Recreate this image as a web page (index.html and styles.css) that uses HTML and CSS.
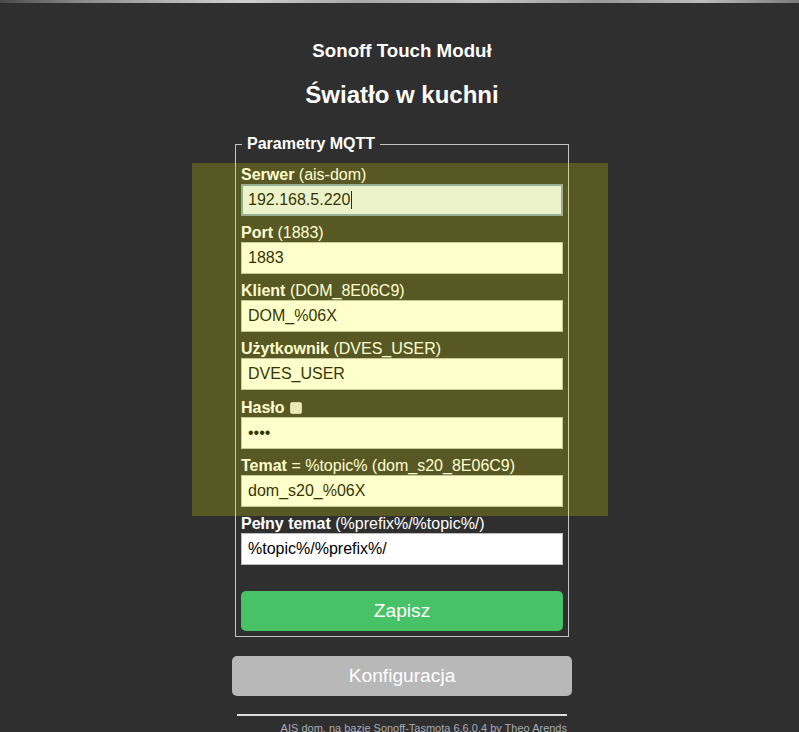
FILE: index.html
```html
<!DOCTYPE html>
<html lang="pl">
<head>
<meta charset="utf-8">
<title>Sonoff Touch Moduł - Parametry MQTT</title>
<link rel="stylesheet" href="styles.css">
</head>
<body>
<div class="topstrip"></div>
<div class="page">
  <div class="container">
    <div class="heading">
      <h3>Sonoff Touch Moduł</h3>
      <h2>Światło w kuchni</h2>
    </div>
    <form class="form">
      <fieldset class="box">
        <legend class="legend">Parametry MQTT</legend>
        <div class="field">
          <label class="label"><b>Serwer</b> (ais-dom)</label>
          <div class="input-wrap">
            <input class="input input-focus" type="text" value="192.168.5.220">
            <span class="caret"></span>
          </div>
        </div>
        <div class="field">
          <label class="label"><b>Port</b> (1883)</label>
          <input class="input" type="text" value="1883">
        </div>
        <div class="field">
          <label class="label"><b>Klient</b> (DOM_8E06C9)</label>
          <input class="input" type="text" value="DOM_%06X">
        </div>
        <div class="field">
          <label class="label"><b>Użytkownik</b> (DVES_USER)</label>
          <input class="input" type="text" value="DVES_USER">
        </div>
        <div class="field">
          <label class="label label-tall"><b>Hasło</b><span class="check"></span></label>
          <input class="input" type="password" value="1234">
        </div>
        <div class="field">
          <label class="label"><b>Temat</b> = %topic% (dom_s20_8E06C9)</label>
          <input class="input" type="text" value="dom_s20_%06X">
        </div>
        <div class="field">
          <label class="label"><b>Pełny temat</b> (%prefix%/%topic%/)</label>
          <input class="input" type="text" value="%topic%/%prefix%/">
        </div>
        <button type="button" class="btn btn-save">Zapisz</button>
      </fieldset>
    </form>
    <button type="button" class="btn btn-config">Konfiguracja</button>
    <div class="footer">
      <hr class="rule">
      <span class="credit">AIS dom. na bazie Sonoff-Tasmota 6.6.0.4 by Theo Arends</span>
    </div>
  </div>
</div>
<div class="highlight"></div>
</body>
</html>
```

FILE: styles.css
```css
html, body {
  margin: 0;
  padding: 0;
  background: #2f2f2f;
  height: 100%;
  overflow: hidden;
}

body {
  font-family: "Liberation Sans", Arial, sans-serif;
  color: #ffffff;
  position: relative;
}

.topstrip {
  height: 3px;
  background: linear-gradient(to right, #4a4a4a 0%, #8a8a8a 10%, #b8b8b8 22%, #d0d0d0 30%, #a8a8a8 45%, #c4c4c4 60%, #9a9a9a 75%, #bdbdbd 88%, #7a7a7a 100%);
}

.page {
  padding-left: 5px;
}

.container {
  width: 340px;
  margin: 0 auto;
}

.heading {
  text-align: center;
}

.heading h3 {
  margin: 37px 0 0;
  font-size: 18.72px;
  line-height: 22px;
  font-weight: bold;
}

.heading h2 {
  margin: 19px 0 0;
  font-size: 24px;
  line-height: 28px;
  font-weight: bold;
}

.form {
  margin: 26px 0 0;
}

.box {
  margin: 0 3px;
  padding: 13px 5px 5px;
  border: 1px solid #c4c4c4;
  min-width: 0;
}

.legend {
  margin-left: 1px;
  padding: 0 5px;
  font-size: 16px;
  line-height: 18px;
  font-weight: bold;
  color: #ffffff;
}

.field {
  display: flex;
  flex-direction: column;
  margin-bottom: 8px;
}

.label {
  font-size: 16px;
  line-height: 18px;
  height: 18px;
  display: flex;
  align-items: center;
  white-space: pre;
}

.label-tall {
  height: 19px;
}

.check {
  display: inline-block;
  width: 10px;
  height: 10px;
  margin-left: 5px;
  background: #e4e4e4;
  border: 1px solid #cfcfcf;
  border-radius: 2px;
}

.input-wrap {
  position: relative;
}

.caret {
  position: absolute;
  left: 110px;
  top: 7px;
  width: 1px;
  height: 18px;
  background: #000000;
}

.input {
  display: block;
  box-sizing: border-box;
  width: 100%;
  height: 32px;
  margin: 0;
  padding: 0 6px;
  border: 1px solid #bdbdbd;
  background: #ffffff;
  color: #000000;
  font-family: "Liberation Sans", Arial, sans-serif;
  font-size: 16px;
  outline: none;
}

.input-focus {
  border: 2px solid #7e9cb8;
  padding: 0 5px;
  background: #e8f0fe;
}

.btn {
  display: block;
  box-sizing: border-box;
  width: 100%;
  height: 40px;
  border: 0;
  border-radius: 5px;
  color: #ffffff;
  font-family: "Liberation Sans", Arial, sans-serif;
  font-size: 19.2px;
  line-height: 40px;
  padding: 0;
}

.btn-save {
  margin-top: 26px;
  background: #47c266;
}

.btn-config {
  margin-top: 19px;
  background: #b8b8b8;
}

.footer {
  text-align: right;
  font-size: 11px;
  padding: 0 5px;
}

.rule {
  margin: 18px 0 6px;
  border: 0;
  height: 2px;
  background: #dedede;
}

.credit {
  color: #a9adb5;
  line-height: 13px;
}

.highlight {
  position: absolute;
  left: 192px;
  top: 163px;
  width: 416px;
  height: 353px;
  background: rgba(255, 255, 0, 0.2);
  pointer-events: none;
}
```
